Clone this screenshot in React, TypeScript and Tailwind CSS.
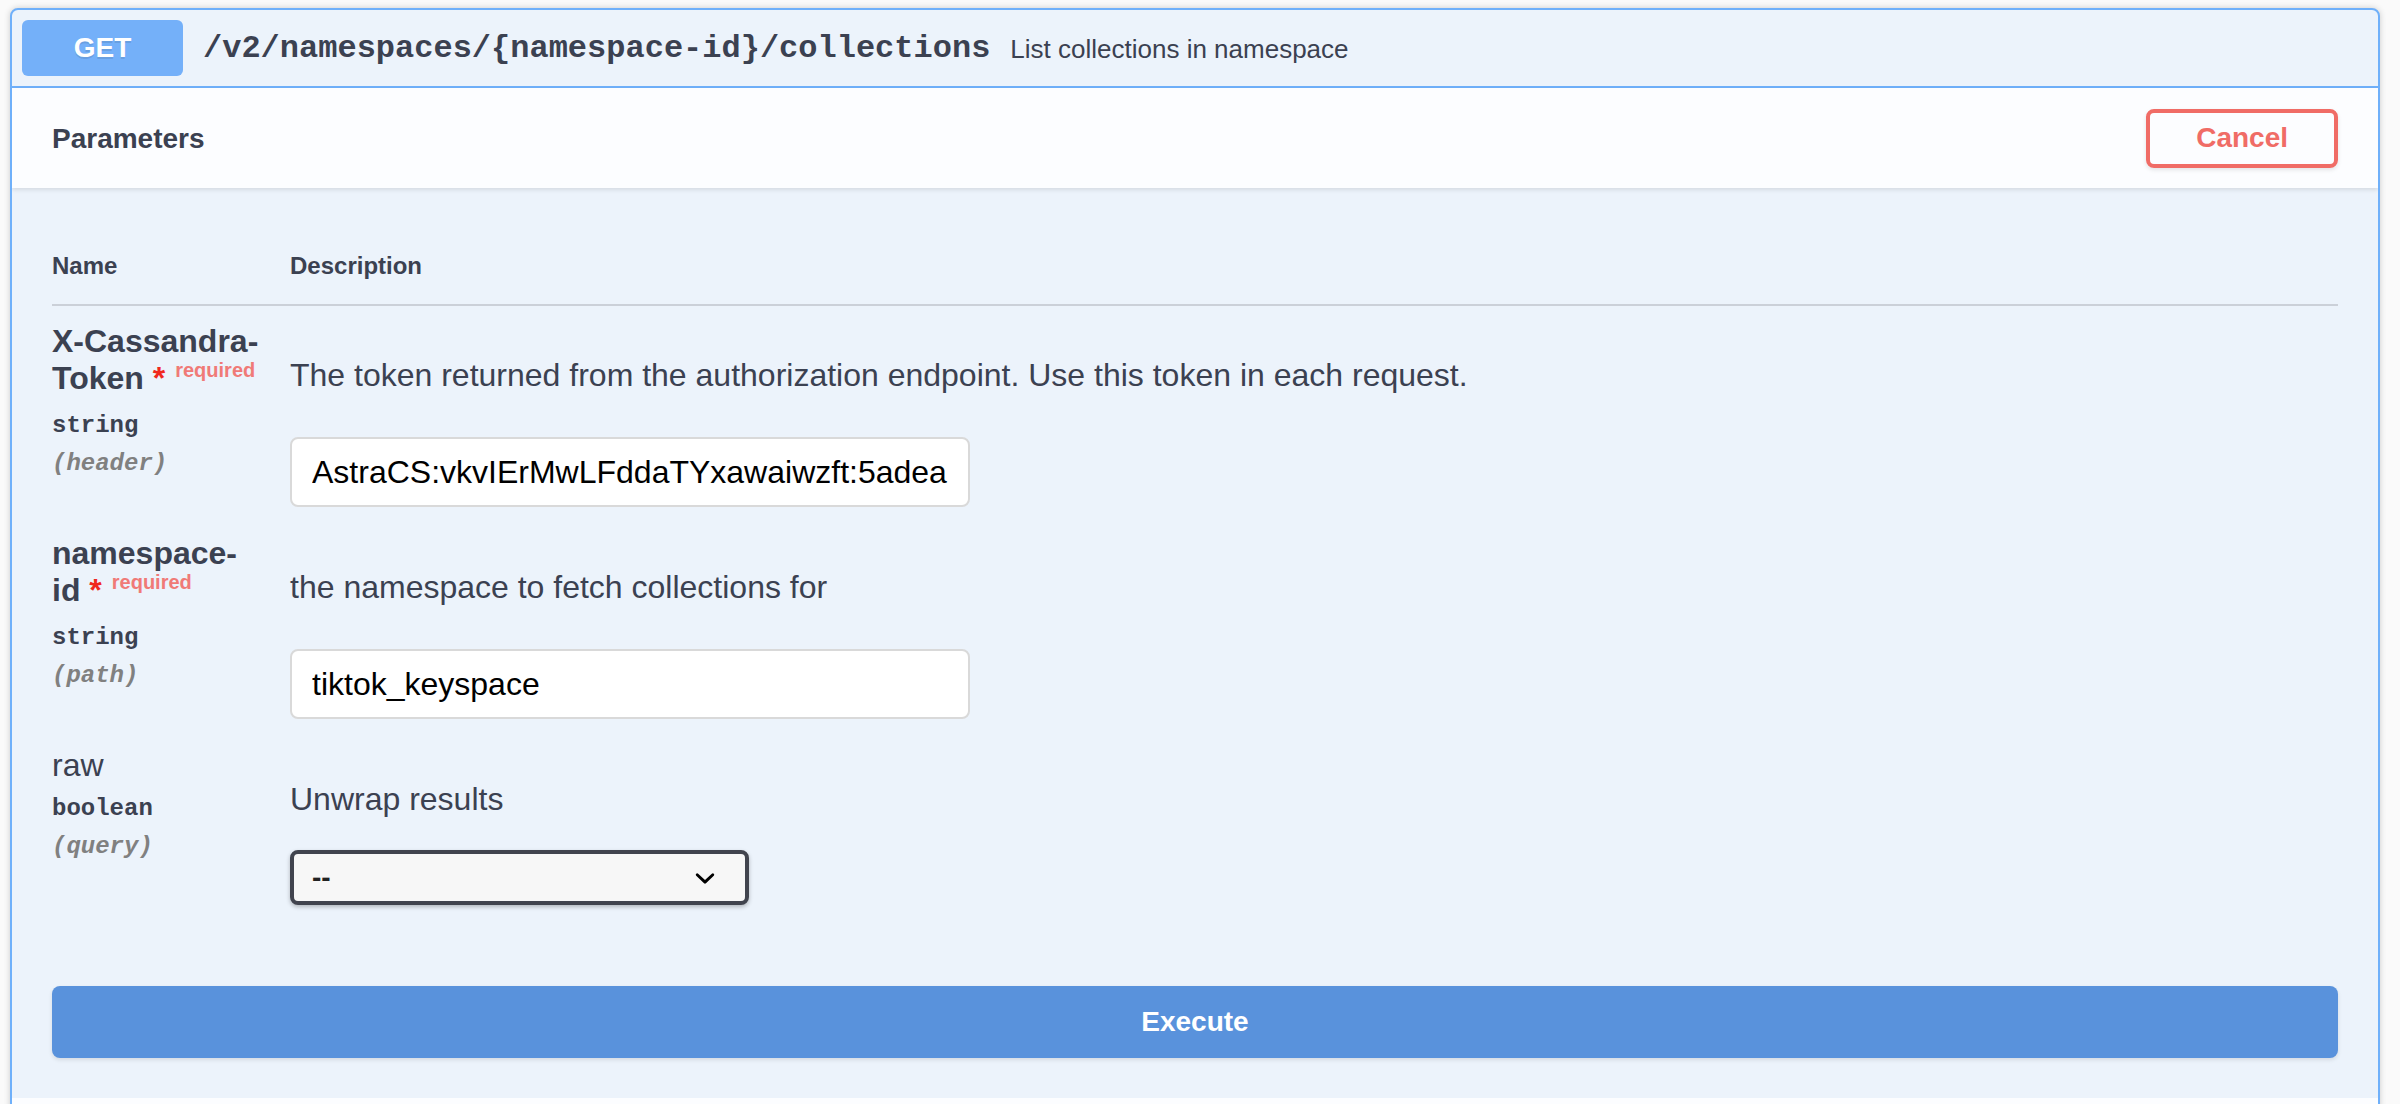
import React from "react";

interface Param {
  head: string;
  tail: string;
  required: boolean;
  type: string;
  location: string;
  description: string;
  value?: string;
  kind: "text" | "select";
}

const params: Param[] = [
  {
    head: "X-Cassandra-",
    tail: "Token",
    required: true,
    type: "string",
    location: "(header)",
    description: "The token returned from the authorization endpoint. Use this token in each request.",
    value: "AstraCS:vkvIErMwLFddaTYxawaiwzft:5adea",
    kind: "text",
  },
  {
    head: "namespace-",
    tail: "id",
    required: true,
    type: "string",
    location: "(path)",
    description: "the namespace to fetch collections for",
    value: "tiktok_keyspace",
    kind: "text",
  },
  {
    head: "",
    tail: "raw",
    required: false,
    type: "boolean",
    location: "(query)",
    description: "Unwrap results",
    kind: "select",
  },
];

function ParamRow({ p, last }: { p: Param; last: boolean }) {
  return (
    <div className={`flex ${last ? "" : "pb-[11px]"}`}>
      {/* Name column */}
      <div className="w-[238px] shrink-0 pt-[17px]">
        <div
          className={`text-[32px] leading-[37px] text-[#3b4151] ${p.required ? "font-bold" : "font-normal"}`}
        >
          {p.head}
          <span className="whitespace-nowrap">
            {p.tail}
            {p.required && (
              <>
                <span className="text-[#f0281e]">{"\u00a0*"}</span>
                <span className="relative top-[-12px] pl-[10px] text-[20px] font-bold text-[#f07a77]">
                  required
                </span>
              </>
            )}
          </span>
        </div>
        <div className="mt-[11px] font-['Liberation_Mono',monospace] text-[24px] leading-[27px] font-bold text-[#3b4151]">
          {p.type}
        </div>
        <div className="mt-[11px] font-['Liberation_Mono',monospace] text-[24px] leading-[27px] font-bold italic text-[#808080]">
          {p.location}
        </div>
      </div>

      {/* Description column */}
      <div className="flex-1 pt-[17px]">
        <p className="mt-[34px] text-[32px] leading-[37px] text-[#3b4151]">{p.description}</p>
        {p.kind === "text" ? (
          <input
            type="text"
            readOnly
            value={p.value}
            className="mt-[43px] h-[70px] w-[680px] rounded-[8px] border-2 border-[#d9d9d9] bg-white px-[20px] text-[32px] text-black outline-none"
          />
        ) : (
          <div className="mt-[32px] flex h-[55px] w-[459px] items-center justify-between rounded-[8px] border-4 border-[#41444e] bg-[#f7f7f7] pl-[18px] shadow-[0_2px_4px_rgba(0,0,0,0.25)]">
            <span className="text-[28px] font-bold text-[#222]">--</span>
            <svg className="mr-[20px] h-[40px] w-[40px]" viewBox="0 0 20 20">
              <path
                fill="#000"
                d="M13.418 7.859a.695.695 0 01.978 0 .68.68 0 010 .969l-3.908 3.83a.697.697 0 01-.979 0l-3.908-3.83a.68.68 0 010-.969.695.695 0 01.978 0L10 11l3.418-3.141z"
              />
            </svg>
          </div>
        )}
      </div>
    </div>
  );
}

export default function App() {
  return (
    <div className="h-screen overflow-hidden bg-[#fafafa] pt-[8px] font-['Liberation_Sans',Arial,sans-serif]">
      <div className="ml-[10px] w-[2370px] overflow-hidden rounded-[8px] border-2 border-[#6fb0fa] bg-[#ecf3fb] shadow-[0_0_6px_rgba(0,0,0,0.19)]">
        {/* Summary */}
        <div className="flex items-center border-b-2 border-[#6fb0fa] p-[10px]">
          <div className="flex h-[56px] w-[161px] items-center justify-center rounded-[6px] bg-[#74b0f9] text-[28px] font-bold text-white [text-shadow:0_2px_0_rgba(0,0,0,0.1)]">
            GET
          </div>
          <div className="px-[20px] pt-[2px] font-['Liberation_Mono',monospace] text-[32px] font-bold text-[#3b4151]">
            /v2/namespaces/&#123;namespace-id&#125;/collections
          </div>
          <div className="pt-[2px] text-[26px] text-[#3b4151]">List collections in namespace</div>
        </div>

        {/* Parameters header */}
        <div className="relative flex h-[100px] items-center justify-between bg-[#fcfdff] px-[40px] shadow-[0_2px_4px_rgba(0,0,0,0.1)]">
          <h4 className="pt-[2px] text-[28px] font-bold text-[#3b4151]">Parameters</h4>
          <button className="h-[59px] rounded-[8px] border-4 border-[#f06c66] px-[46px] text-[28px] font-bold text-[#f06c66] shadow-[0_2px_4px_rgba(0,0,0,0.1)]">
            Cancel
          </button>
        </div>

        {/* Table */}
        <div className="px-[40px] pt-[40px] pb-[41px]">
          <div className="flex border-b-2 border-[#cbd0d8] py-[24px] text-[24px] leading-[28px] font-bold text-[#3b4151]">
            <div className="w-[238px] shrink-0">Name</div>
            <div>Description</div>
          </div>
          {params.map((p, i) => (
            <ParamRow key={p.tail} p={p} last={i === params.length - 1} />
          ))}
        </div>

        {/* Execute */}
        <div className="px-[40px] py-[40px]">
          <button className="h-[72px] w-full rounded-[8px] bg-[#5992dc] text-[28px] font-bold text-white shadow-[0_2px_4px_rgba(0,0,0,0.1)]">
            Execute
          </button>
        </div>

        <div className="h-[100px] bg-[#fcfdff]" />
      </div>
    </div>
  );
}
